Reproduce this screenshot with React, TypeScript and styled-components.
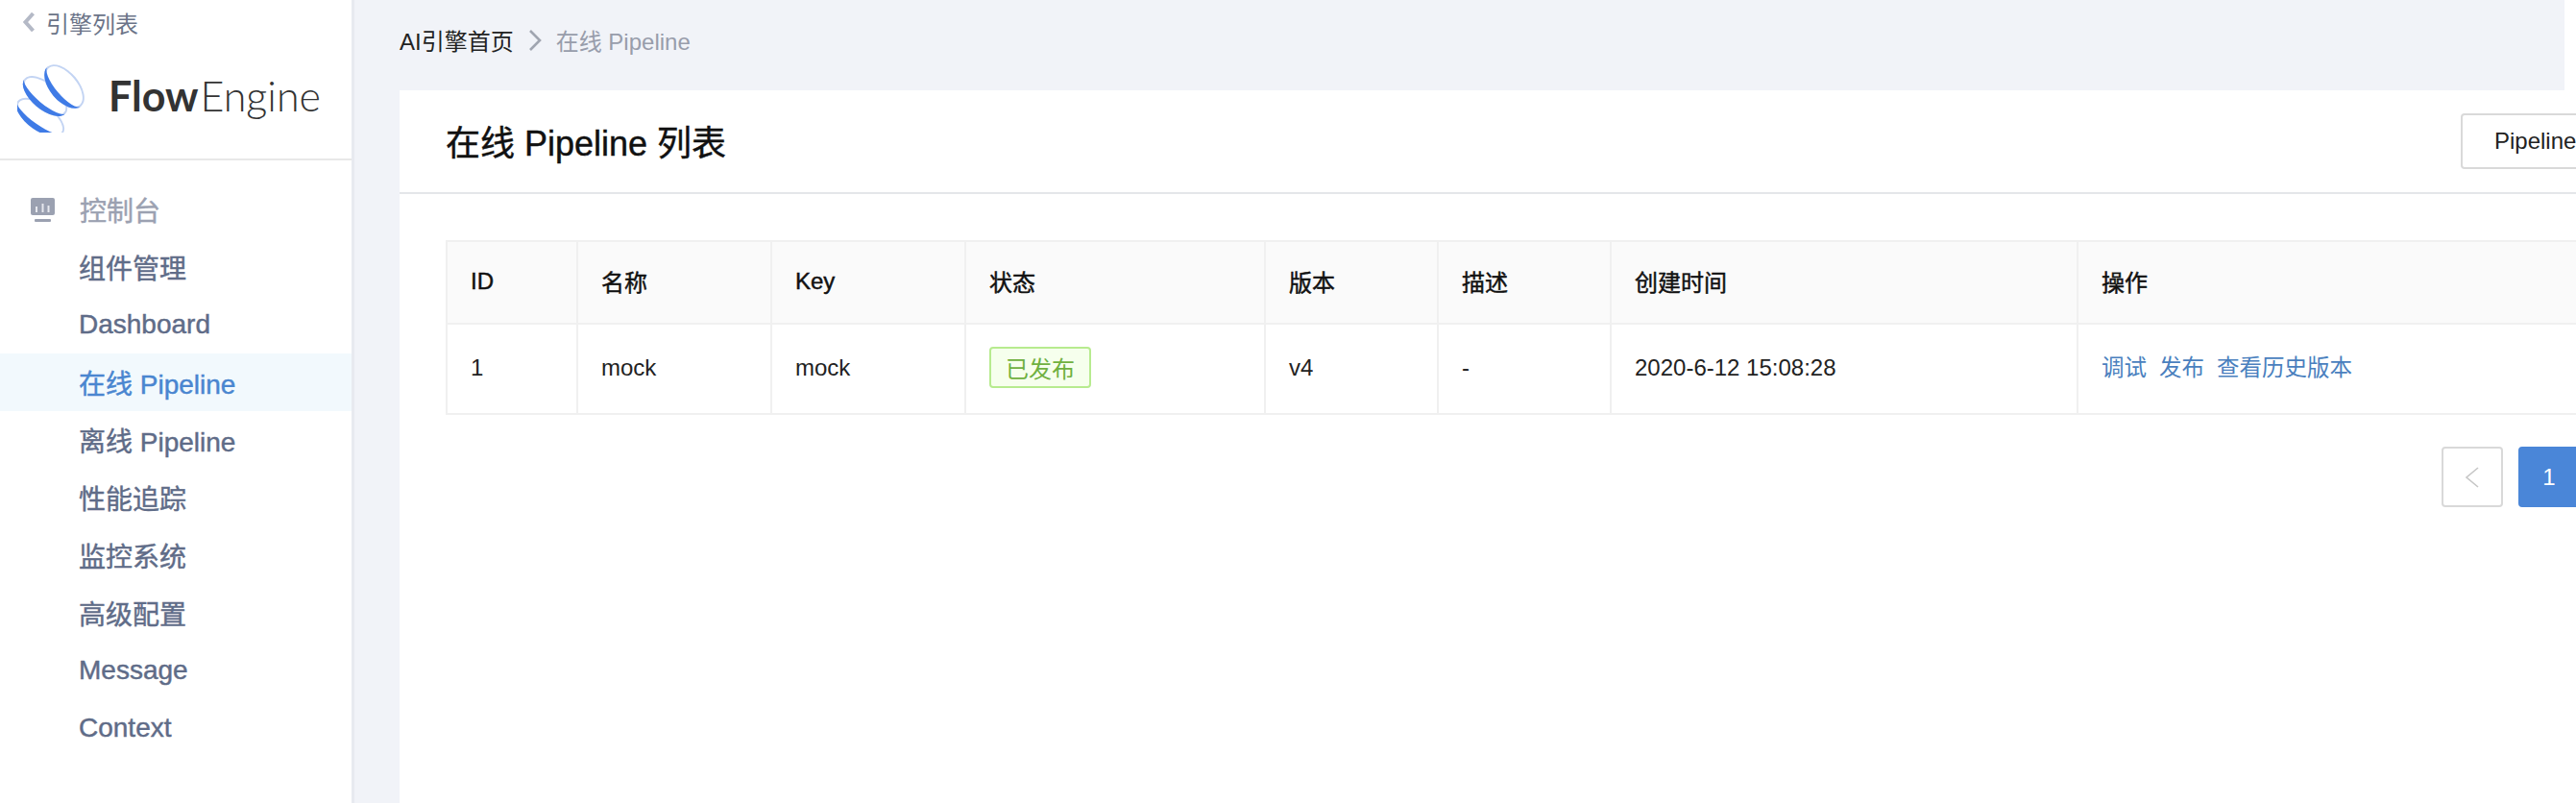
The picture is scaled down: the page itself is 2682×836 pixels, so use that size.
import React from 'react'
import styled, { createGlobalStyle, css } from 'styled-components'

const FONT = '"Liberation Sans", "Noto Sans CJK SC", sans-serif'

// Liberation has no medium weight, a thin stroke gets close to it
const medium = css`
  font-family: ${FONT};
  font-weight: 400;
  -webkit-text-stroke: 0.45px currentColor;
`

const GlobalStyle = createGlobalStyle`
  html, body {
    margin: 0;
    padding: 0;
    background: #fff;
  }
  * {
    box-sizing: border-box;
  }
`

const navItems = [
  '组件管理',
  'Dashboard',
  '在线 Pipeline',
  '离线 Pipeline',
  '性能追踪',
  '监控系统',
  '高级配置',
  'Message',
  'Context',
]

const columns = [
  { title: 'ID', width: 136 },
  { title: '名称', width: 202 },
  { title: 'Key', width: 202 },
  { title: '状态', width: 312 },
  { title: '版本', width: 180 },
  { title: '描述', width: 180 },
  { title: '创建时间', width: 486 },
  { title: '操作', width: 600 },
]

const rings = [
  { x: 24, y: 62, angle: 35, rx: 29, ry: 14 },
  { x: 29, y: 40, angle: 40, rx: 28, ry: 14 },
  { x: 49, y: 30, angle: 50, rx: 27, ry: 15 },
]

const Logo = () => (
  <svg width="72" height="78" viewBox="0 0 72 78">
    {rings.map((r) => (
      <g key={r.x + r.y} transform={`translate(${r.x} ${r.y}) rotate(${r.angle})`}>
        <ellipse rx={r.rx} ry={r.ry} fill="#c3d4f3" />
        <ellipse rx={r.rx - 2} ry={r.ry - 2} fill="#fff" />
        <path
          d={`M${-r.rx} 0A${r.rx} ${r.ry} 0 0 0 ${r.rx} 0A${r.rx} ${r.ry - 6} 0 0 1 ${-r.rx} 0Z`}
          fill="#3f7be6"
        />
      </g>
    ))}
  </svg>
)

export default function App() {
  return (
    <Page>
      <GlobalStyle />
      <Sidebar>
        <BackLink>
          <svg width="14" height="22" viewBox="0 0 14 22" fill="none">
            <path d="M11.5 2 L3.5 11 L11.5 20" stroke="#b4b9c6" strokeWidth="4" />
          </svg>
          <span>引擎列表</span>
        </BackLink>
        <Brand>
          <Logo />
          <BrandName>
            <b>Flow</b>Engine
          </BrandName>
        </Brand>
        <Nav>
          <NavGroup>
            <svg width="25" height="25" viewBox="0 0 25 25">
              <rect x="0" y="0" width="25" height="18" rx="2" fill="#9ba1b1" />
              <rect x="4" y="22" width="17" height="3" rx="1" fill="#9ba1b1" />
              <path d="M6 9V15M12.500 6V15M18.500 8V15" stroke="#e6e8ee" strokeWidth="2" />
            </svg>
            <span>控制台</span>
          </NavGroup>
          {navItems.map((item) => (
            <NavItem key={item} $active={item === '在线 Pipeline'}>
              {item}
            </NavItem>
          ))}
        </Nav>
      </Sidebar>
      <Main>
        <Breadcrumb>
          <span>AI引擎首页</span>
          <svg width="14" height="22" viewBox="0 0 14 22" fill="none">
            <path d="M2 1 L12 11 L2 21" stroke="#a0a5b0" strokeWidth="2.6" />
          </svg>
          <BreadcrumbCurrent>在线 Pipeline</BreadcrumbCurrent>
        </Breadcrumb>
        <Card>
          <CardHeader>
            <Title>在线 Pipeline 列表</Title>
            <OutlineButton>Pipeline</OutlineButton>
          </CardHeader>
          <CardBody>
            <Table>
              <colgroup>
                {columns.map((col) => (
                  <col key={col.title} width={col.width} />
                ))}
              </colgroup>
              <thead>
                <tr>
                  {columns.map((col) => (
                    <HeadCell key={col.title}>{col.title}</HeadCell>
                  ))}
                </tr>
              </thead>
              <tbody>
                <tr>
                  <Cell>1</Cell>
                  <Cell>mock</Cell>
                  <Cell>mock</Cell>
                  <Cell>
                    <StatusTag>已发布</StatusTag>
                  </Cell>
                  <Cell>v4</Cell>
                  <Cell>-</Cell>
                  <Cell>2020-6-12 15:08:28</Cell>
                  <Cell>
                    <Actions>
                      <a>调试</a>
                      <a>发布</a>
                      <a>查看历史版本</a>
                    </Actions>
                  </Cell>
                </tr>
              </tbody>
            </Table>
            <Pagination>
              <PageButton>
                <svg width="16" height="22" viewBox="0 0 16 22" fill="none">
                  <path d="M14 1 L2 11 L14 21" stroke="#c6c6c6" strokeWidth="1.6" />
                </svg>
              </PageButton>
              <PageButton $active>1</PageButton>
            </Pagination>
          </CardBody>
        </Card>
      </Main>
    </Page>
  )
}

const Page = styled.div`
  display: flex;
  width: 2682px;
  height: 836px;
  overflow: hidden;
  font-family: ${FONT};
  color: #111;
`

const Sidebar = styled.aside`
  flex: none;
  width: 369px;
  border-right: 3px solid #e8eaf0;
  background: #fff;
`

const BackLink = styled.div`
  display: flex;
  align-items: center;
  gap: 11px;
  height: 42px;
  padding: 4px 0 0 23px;
  font-size: 24px;
  color: #6b7488;
`

const Brand = styled.div`
  display: flex;
  align-items: center;
  gap: 23px;
  height: 125px;
  padding: 0 0 9px 18px;
  border-bottom: 2px solid #e8e8e8;
`

const BrandName = styled.div`
  font-family: Lato, sans-serif;
  font-size: 43px;
  font-weight: 300;
  color: #333;
  b {
    margin-right: 2px;
    font-weight: 700;
  }
`

const Nav = styled.nav`
  padding-top: 21px;
`

const NavGroup = styled.div`
  ${medium}
  display: flex;
  align-items: center;
  gap: 26px;
  height: 60px;
  padding-left: 32px;
  font-size: 28px;
  color: #9ba1b1;
`

const NavItem = styled.div<{ $active?: boolean }>`
  ${medium}
  display: flex;
  align-items: center;
  height: 60px;
  padding-left: 82px;
  font-size: 28px;
  color: ${(p) => (p.$active ? '#4a86d0' : '#5f6c88')};
  background: ${(p) => (p.$active ? '#f2f9fd' : 'transparent')};
`

const Main = styled.main`
  flex: none;
  width: 2301px;
  height: 100%;
  padding-left: 47px;
  background: #f1f3f8;
`

const Breadcrumb = styled.div`
  display: flex;
  align-items: center;
  gap: 15px;
  height: 94px;
  padding-bottom: 11px;
  font-size: 24px;
  color: #222;
`

const BreadcrumbCurrent = styled.span`
  color: #989dab;
`

const Card = styled.section`
  width: 2500px;
  height: 742px;
  background: #fff;
`

const CardHeader = styled.header`
  display: flex;
  align-items: center;
  gap: 1803px;
  height: 108px;
  padding: 0 0 3px 48px;
  border-bottom: 2px solid #e4e6e9;
`

const Title = styled.h1`
  ${medium}
  flex: none;
  width: 295px;
  margin: 0;
  font-size: 36px;
  color: #111;
  white-space: nowrap;
`

const OutlineButton = styled.button`
  flex: none;
  width: 220px;
  height: 58px;
  margin-top: 3px;
  padding: 0 0 0 33px;
  border: 2px solid #d9d9d9;
  border-radius: 4px;
  background: #fff;
  font-family: ${FONT};
  font-size: 24px;
  color: #222;
  text-align: left;
`

const CardBody = styled.div`
  padding: 48px 0 0 48px;
`

const Table = styled.table`
  table-layout: fixed;
  width: 2298px;
  border-collapse: collapse;
  font-size: 24px;
`

const HeadCell = styled.th`
  ${medium}
  height: 86px;
  padding: 0 0 3px 24px;
  border: 2px solid #f0f0f0;
  background: #fafafa;
  font-size: 24px;
  color: #111;
  text-align: left;
`

const Cell = styled.td`
  height: 94px;
  padding: 0 0 3px 24px;
  border: 2px solid #f0f0f0;
  color: #222;
`

const StatusTag = styled.span`
  display: inline-flex;
  align-items: center;
  height: 43px;
  padding: 0 15px;
  border: 2px solid #b7eb8f;
  border-radius: 4px;
  background: #f6ffed;
  color: #6fb03f;
`

const Actions = styled.div`
  display: flex;
  gap: 13px;
  font-size: 23.5px;
  line-height: 28px;
  color: #4a7fbe;
`

const Pagination = styled.div`
  display: flex;
  gap: 16px;
  margin: 33px 0 0 2078px;
`

const PageButton = styled.div<{ $active?: boolean }>`
  display: flex;
  flex: none;
  align-items: center;
  justify-content: center;
  width: 64px;
  height: 63px;
  border: 2px solid ${(p) => (p.$active ? '#4a86d8' : '#d9d9d9')};
  border-radius: 4px;
  background: ${(p) => (p.$active ? '#4a86d8' : '#fff')};
  font-size: 24px;
  color: #fff;
`
